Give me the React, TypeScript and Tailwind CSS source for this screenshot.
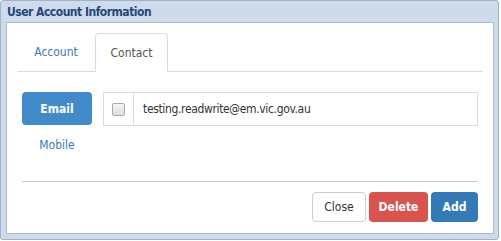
export default function App() {
  return (
    <div className="w-[501px] h-[241px] bg-white" style={{ fontFamily: '"DejaVu Sans Condensed", "DejaVu Sans", sans-serif' }}>
      <div className="w-[499px] h-[240px] bg-[#cfdbea] border border-[#9eb3cf] rounded-[3px] flex flex-col pl-[5px] pr-[4px] pb-[5px]">
        <div className="h-[21px] flex items-center pl-[1px] text-[12px] font-bold tracking-[-0.5px] text-[#23497c]">User Account Information</div>
        <div className="flex-1 bg-white border border-[#a8bcd6] px-[10px] pt-[10px]">
          <div className="flex border-b border-[#dcdcdc] h-[39px]">
            <div className="w-[78px] flex items-center justify-center text-[12px] text-[#3a7ab8]">Account</div>
            <div className="w-[73px] flex items-center justify-center text-[12px] text-[#555] border border-[#dcdcdc] border-b-white rounded-t-[4px] bg-white -mb-px">Contact</div>
          </div>
          <div className="px-[5px] pt-[20px]">
            <div className="flex gap-[11px]">
              <div className="flex flex-col w-[70px]">
                <div className="h-[33px] rounded-[4px] bg-[#428bca] text-white text-[12px] font-bold flex items-center justify-center">Email</div>
                <div className="h-[40px] flex items-center justify-center text-[12px] text-[#3a7ab8]">Mobile</div>
              </div>
              <div className="flex-1 flex h-[34px] border border-[#dcdcdc]">
                <div className="w-[30px] border-r border-[#dcdcdc] flex items-center justify-center">
                  <div className="w-[13px] h-[13px] rounded-[2px] border border-[#a9a9a9] bg-gradient-to-b from-[#f4f4f4] to-[#dcdcdc]"></div>
                </div>
                <div className="flex items-center pl-[9px] text-[12px] tracking-[-0.35px] text-[#333]">testing.readwrite@em.vic.gov.au</div>
              </div>
            </div>
            <div className="mt-[16px] border-t border-[#c8c8c8]"></div>
            <div className="flex justify-end gap-[3px] pt-[10px]">
              <div className="w-[54px] h-[30px] rounded-[4px] border border-[#cccccc] bg-white text-[#333] text-[12px] flex items-center justify-center">Close</div>
              <div className="w-[59px] h-[30px] rounded-[4px] bg-[#d9534f] text-white text-[12px] font-bold flex items-center justify-center">Delete</div>
              <div className="w-[47px] h-[30px] rounded-[4px] bg-[#337ab7] text-white text-[12px] font-bold flex items-center justify-center">Add</div>
            </div>
          </div>
        </div>
      </div>
    </div>
  );
}
